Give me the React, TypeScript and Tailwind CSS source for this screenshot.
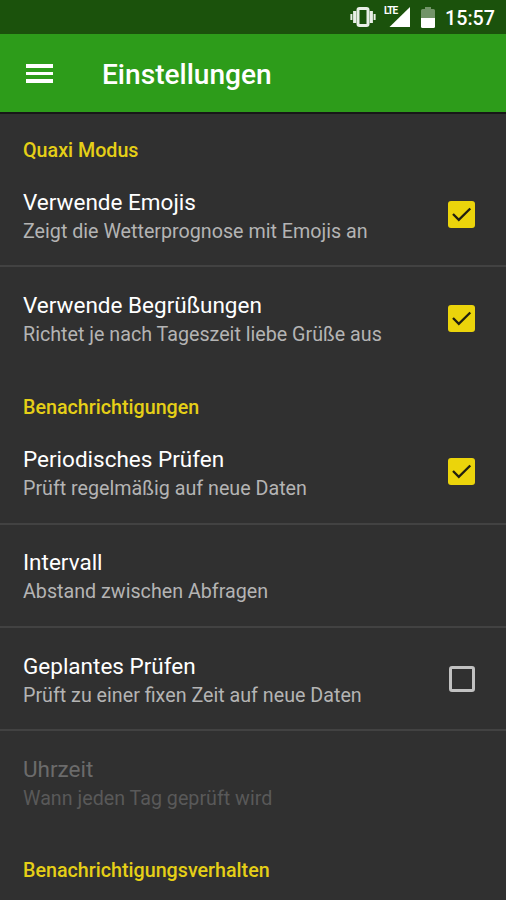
import { useState } from 'react';
import clsx from 'clsx';

type Setting = {
  id: string;
  title: string;
  summary: string;
  checkbox?: boolean;
  disabled?: boolean;
};

type Section = {
  name: string;
  items: Setting[];
};

const sections: Section[] = [
  {
    name: 'Quaxi Modus',
    items: [
      { id: 'emojis', title: 'Verwende Emojis', summary: 'Zeigt die Wetterprognose mit Emojis an', checkbox: true },
      { id: 'greetings', title: 'Verwende Begrüßungen', summary: 'Richtet je nach Tageszeit liebe Grüße aus', checkbox: true },
    ],
  },
  {
    name: 'Benachrichtigungen',
    items: [
      { id: 'periodic', title: 'Periodisches Prüfen', summary: 'Prüft regelmäßig auf neue Daten', checkbox: true },
      { id: 'interval', title: 'Intervall', summary: 'Abstand zwischen Abfragen' },
      { id: 'scheduled', title: 'Geplantes Prüfen', summary: 'Prüft zu einer fixen Zeit auf neue Daten', checkbox: true },
      { id: 'time', title: 'Uhrzeit', summary: 'Wann jeden Tag geprüft wird', disabled: true },
    ],
  },
  { name: 'Benachrichtigungsverhalten', items: [] },
];

function StatusBar() {
  return (
    <div className="h-[34px] shrink-0 bg-[#1b520c] flex items-center justify-end pr-[11px] text-white">
      <svg width="26" height="20" viewBox="0 0 26 20" className="mr-[7px]" fill="none" stroke="#e9efe7">
        <rect x="8" y="1.5" width="10" height="17" rx="1.5" strokeWidth="3" />
        <path d="M4.700 4v12M21.300 4v12" strokeWidth="3.2" />
        <path d="M1.400 7v6M24.600 7v6" strokeWidth="2" />
      </svg>
      <div className="relative w-[27px] h-5 mr-[11px]">
        <svg width="27" height="20" viewBox="0 0 27 20">
          <path d="M27 0v20H6.500z" fill="#fff" />
        </svg>
        <span className="absolute left-px -top-px bg-[#1b520c] pr-px text-[10px] leading-[10px] font-bold tracking-[-1px]">LTE</span>
      </div>
      <svg width="14" height="21" viewBox="0 0 14 21" className="mr-[10px]">
        <path d="M4 0h6v2h2.500q1.500 0 1.500 1.500V11H0V3.500q0-1.500 1.500-1.500H4z" fill="#729468" />
        <path d="M0 11h14v8.500q0 1.500-1.500 1.500h-11Q0 21 0 19.500z" fill="#fff" />
      </svg>
      <span className="pt-1 text-[19.7px] leading-none font-medium">15:57</span>
    </div>
  );
}

function Toolbar() {
  return (
    <header className="h-[79.5px] shrink-0 bg-[#2d9c1a] border-b-2 border-[#171717] flex items-center pl-[26px]">
      <button aria-label="Menü" className="w-[27px] mt-px flex flex-col gap-1">
        <span className="h-[3.5px] bg-white" />
        <span className="h-[3.5px] bg-white" />
        <span className="h-[3.5px] bg-white" />
      </button>
      <h1 className="ml-[49px] pt-[5px] text-[28.1px] leading-none font-medium text-white">Einstellungen</h1>
    </header>
  );
}

function Checkbox({ checked }: { checked: boolean }) {
  return (
    <span
      className={clsx(
        'rounded-[3px] flex items-center justify-center shrink-0',
        checked ? 'size-[27px] bg-[#ebd40b]' : 'size-[26px] border-[3px] border-[#c1c1c1]'
      )}
    >
      {checked && (
        <svg width="27" height="27" viewBox="0 0 27 27" fill="none" stroke="#201f10" strokeWidth="2.3">
          <path d="M5 13l5.800 5.800L22.300 7.500" />
        </svg>
      )}
    </span>
  );
}

export default function App() {
  const [values, setValues] = useState<Record<string, boolean>>({
    emojis: true,
    greetings: true,
    periodic: true,
    scheduled: false,
  });

  const toggle = (id: string) => setValues((v) => ({ ...v, [id]: !v[id] }));

  return (
    <div className="h-screen overflow-hidden flex flex-col bg-[#303030] font-['Roboto',sans-serif]">
      <StatusBar />
      <Toolbar />
      <main className="flex-1 min-h-0 overflow-hidden">
        {sections.map((section) => (
          <section key={section.name}>
            <h2 className="h-[50.6px] pt-[25px] pl-[23px] text-[19.7px] leading-6 font-medium text-[#e5cf17]">
              {section.name}
            </h2>
            {section.items.map((item, i) => (
              <div
                key={item.id}
                onClick={() => item.checkbox && toggle(item.id)}
                className={clsx(
                  'h-[103.3px] pl-[23px] pr-[31px] flex items-center justify-between border-b-2',
                  i < section.items.length - 1 ? 'border-[#424242]' : 'border-transparent'
                )}
              >
                <div className="pt-1">
                  <div className={clsx('text-[22.5px] leading-7', item.disabled ? 'text-[#6b6b6b]' : 'text-white')}>
                    {item.title}
                  </div>
                  <div className={clsx('mt-0.5 text-[19.7px] leading-7', item.disabled ? 'text-[#595959]' : 'text-[#b4b4b4]')}>
                    {item.summary}
                  </div>
                </div>
                {item.checkbox && <Checkbox checked={values[item.id]} />}
              </div>
            ))}
          </section>
        ))}
      </main>
    </div>
  );
}
